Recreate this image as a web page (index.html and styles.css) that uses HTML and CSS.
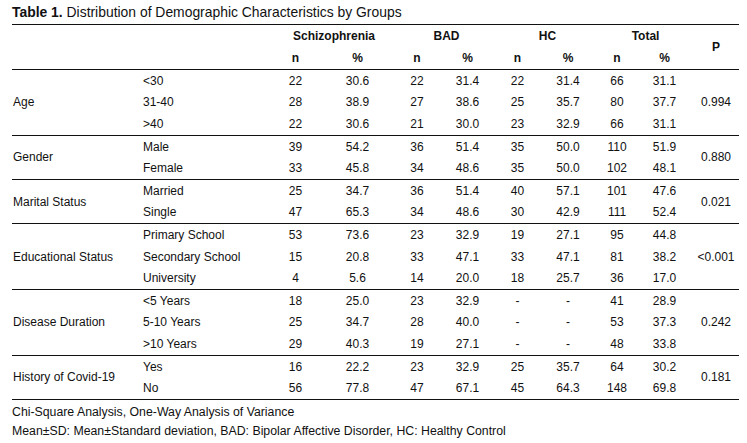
FILE: index.html
```html
<!DOCTYPE html>
<html lang="en">
<head>
    <meta charset="UTF-8">
    <meta name="viewport" content="width=device-width, initial-scale=1.0">
    <title>Table 1</title>
    <link rel="stylesheet" href="styles.css">
</head>
<body>
    <div class="table-title"><b>Table 1.</b> Distribution of Demographic Characteristics by Groups</div>
    <table class="data-table">
        <colgroup>
            <col class="c-label">
            <col class="c-sub">
            <col class="c-n1"><col class="c-p1">
            <col class="c-n2"><col class="c-p2">
            <col class="c-n3"><col class="c-p3">
            <col class="c-n4"><col class="c-p4">
            <col class="c-p">
        </colgroup>
        <thead>
            <tr>
                <th></th>
                <th></th>
                <th colspan="2">Schizophrenia</th>
                <th colspan="2">BAD</th>
                <th colspan="2">HC</th>
                <th colspan="2">Total</th>
                <th rowspan="2">P</th>
            </tr>
            <tr>
                <th></th>
                <th></th>
                <th>n</th><th>%</th>
                <th>n</th><th>%</th>
                <th>n</th><th>%</th>
                <th>n</th><th>%</th>
            </tr>
        </thead>
        <!-- 年龄 -->
        <tbody>
            <tr>
                <td class="label" rowspan="3">Age</td>
                <td class="sub">&lt;30</td>
                <td>22</td><td>30.6</td><td>22</td><td>31.4</td><td>22</td><td>31.4</td><td>66</td><td>31.1</td>
                <td rowspan="3">0.994</td>
            </tr>
            <tr>
                <td class="sub">31-40</td>
                <td>28</td><td>38.9</td><td>27</td><td>38.6</td><td>25</td><td>35.7</td><td>80</td><td>37.7</td>
            </tr>
            <tr>
                <td class="sub">&gt;40</td>
                <td>22</td><td>30.6</td><td>21</td><td>30.0</td><td>23</td><td>32.9</td><td>66</td><td>31.1</td>
            </tr>
        </tbody>
        <!-- 性别 -->
        <tbody>
            <tr>
                <td class="label" rowspan="2">Gender</td>
                <td class="sub">Male</td>
                <td>39</td><td>54.2</td><td>36</td><td>51.4</td><td>35</td><td>50.0</td><td>110</td><td>51.9</td>
                <td rowspan="2">0.880</td>
            </tr>
            <tr>
                <td class="sub">Female</td>
                <td>33</td><td>45.8</td><td>34</td><td>48.6</td><td>35</td><td>50.0</td><td>102</td><td>48.1</td>
            </tr>
        </tbody>
        <!-- 婚姻状况 -->
        <tbody>
            <tr>
                <td class="label" rowspan="2">Marital Status</td>
                <td class="sub">Married</td>
                <td>25</td><td>34.7</td><td>36</td><td>51.4</td><td>40</td><td>57.1</td><td>101</td><td>47.6</td>
                <td rowspan="2">0.021</td>
            </tr>
            <tr>
                <td class="sub">Single</td>
                <td>47</td><td>65.3</td><td>34</td><td>48.6</td><td>30</td><td>42.9</td><td>111</td><td>52.4</td>
            </tr>
        </tbody>
        <!-- 教育 -->
        <tbody>
            <tr>
                <td class="label" rowspan="3">Educational Status</td>
                <td class="sub">Primary School</td>
                <td>53</td><td>73.6</td><td>23</td><td>32.9</td><td>19</td><td>27.1</td><td>95</td><td>44.8</td>
                <td rowspan="3">&lt;0.001</td>
            </tr>
            <tr>
                <td class="sub">Secondary School</td>
                <td>15</td><td>20.8</td><td>33</td><td>47.1</td><td>33</td><td>47.1</td><td>81</td><td>38.2</td>
            </tr>
            <tr>
                <td class="sub">University</td>
                <td>4</td><td>5.6</td><td>14</td><td>20.0</td><td>18</td><td>25.7</td><td>36</td><td>17.0</td>
            </tr>
        </tbody>
        <!-- 病程 -->
        <tbody>
            <tr>
                <td class="label" rowspan="3">Disease Duration</td>
                <td class="sub">&lt;5 Years</td>
                <td>18</td><td>25.0</td><td>23</td><td>32.9</td><td>-</td><td>-</td><td>41</td><td>28.9</td>
                <td rowspan="3">0.242</td>
            </tr>
            <tr>
                <td class="sub">5-10 Years</td>
                <td>25</td><td>34.7</td><td>28</td><td>40.0</td><td>-</td><td>-</td><td>53</td><td>37.3</td>
            </tr>
            <tr>
                <td class="sub">&gt;10 Years</td>
                <td>29</td><td>40.3</td><td>19</td><td>27.1</td><td>-</td><td>-</td><td>48</td><td>33.8</td>
            </tr>
        </tbody>
        <!-- 新冠病史 -->
        <tbody>
            <tr>
                <td class="label" rowspan="2">History of Covid-19</td>
                <td class="sub">Yes</td>
                <td>16</td><td>22.2</td><td>23</td><td>32.9</td><td>25</td><td>35.7</td><td>64</td><td>30.2</td>
                <td rowspan="2">0.181</td>
            </tr>
            <tr>
                <td class="sub">No</td>
                <td>56</td><td>77.8</td><td>47</td><td>67.1</td><td>45</td><td>64.3</td><td>148</td><td>69.8</td>
            </tr>
        </tbody>
    </table>
    <div class="table-notes">
        <p>Chi-Square Analysis, One-Way Analysis of Variance</p>
        <p>Mean±SD: Mean±Standard deviation, BAD: Bipolar Affective Disorder, HC: Healthy Control</p>
    </div>
</body>
</html>
```

FILE: styles.css
```css
* {
    margin: 0;
    padding: 0;
}
body {
    padding: 4px 8px 0 12px;
    background-color: #fff;
    color: #111;
    font-family: "Liberation Sans", Arial, sans-serif;
    font-size: 12px;
}
.table-title {
    font-size: 13.9px;
    line-height: 16px;
}
.data-table {
    width: 727px;
    margin-top: 4px;
    table-layout: fixed;
    border-collapse: collapse;
    border-top: 1px solid #111;
    border-bottom: 1px solid #111;
}
.c-label { width: 131px; }
.c-sub { width: 129px; }
.c-n1 { width: 47px; }
.c-p1 { width: 77px; }
.c-n2 { width: 42px; }
.c-p2 { width: 59px; }
.c-n3 { width: 41px; }
.c-p3 { width: 60px; }
.c-n4 { width: 38px; }
.c-p4 { width: 57px; }
.c-p { width: 46px; }
.data-table th {
    height: 22px;
    padding: 0;
    font-weight: 700;
    text-align: center;
    vertical-align: middle;
    line-height: 14px;
}
.data-table thead {
    border-bottom: 1px solid #111;
}
.data-table tbody {
    border-bottom: 1px solid #111;
}
.data-table td {
    height: 21.6px;
    padding: 0;
    text-align: center;
    vertical-align: middle;
    line-height: 14px;
    white-space: nowrap;
}
.data-table td.label {
    padding-left: 1px;
    text-align: left;
}
.data-table td.sub {
    text-align: left;
}
.table-notes {
    margin-top: 3px;
    font-size: 12.3px;
    line-height: 19px;
}
```
